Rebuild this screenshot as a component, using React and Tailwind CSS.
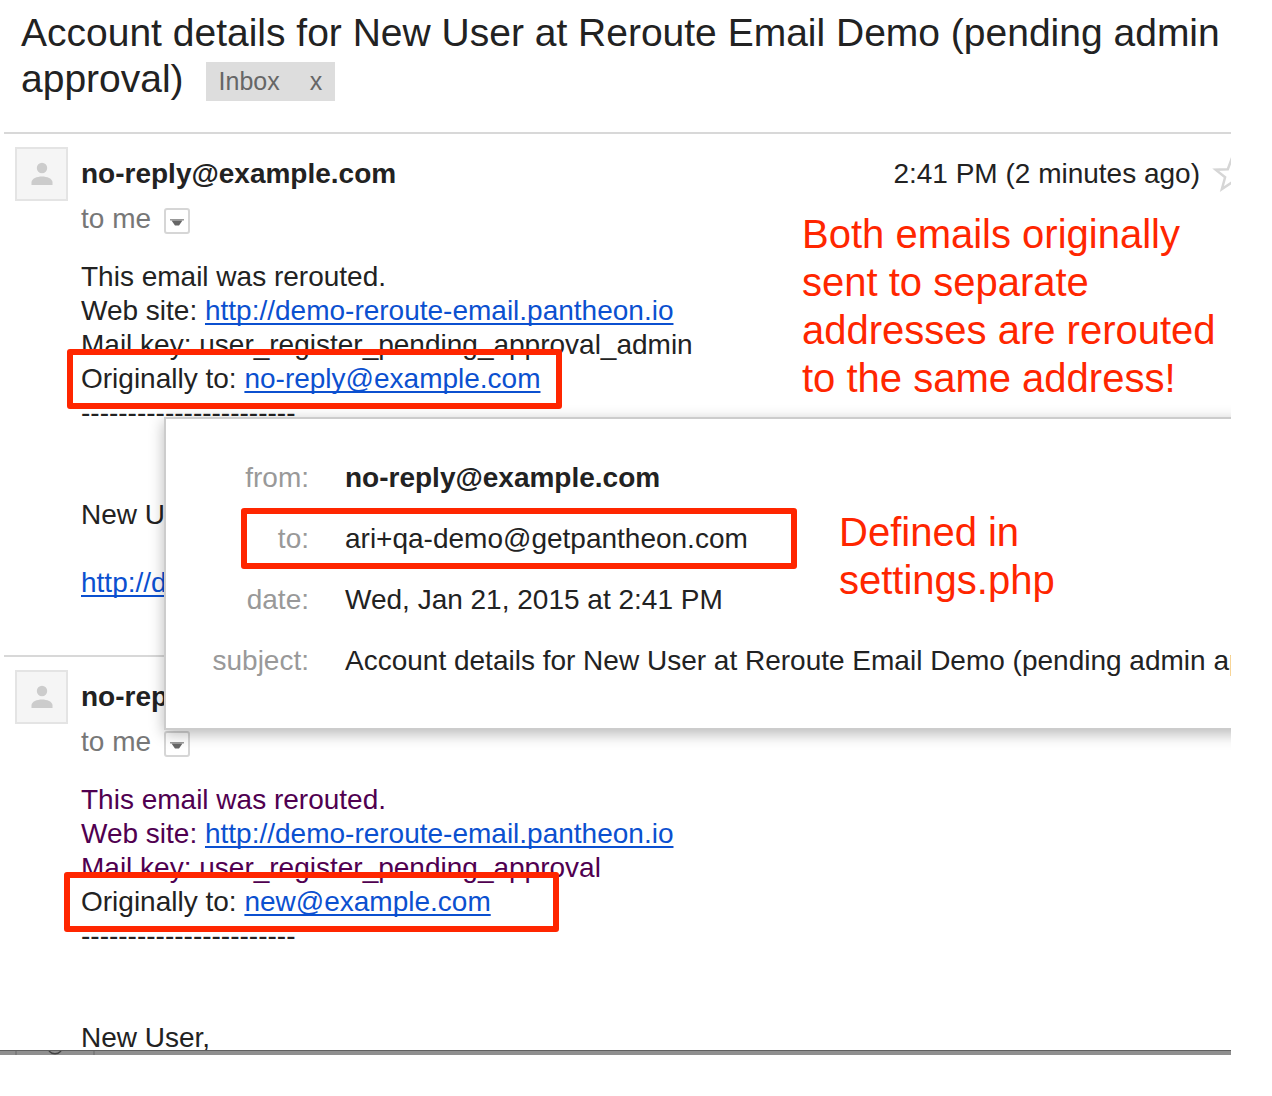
const SUBJECT = 'Account details for New User at Reroute Email Demo (pending admin approval)';

function Avatar() {
  return (
    <div className="flex h-[54px] w-[53px] shrink-0 items-center justify-center border-2 border-[#e4e4e4] bg-[#f5f5f5]">
      <svg viewBox="0 0 22 24" className="h-6 w-[22px]" fill="#cccccc" aria-hidden="true">
        <circle cx="11" cy="6" r="5.2" />
        <path d="M0.500 23v-2.500c0-4 5.500-6 10.500-6s10.500 2 10.500 6V23z" />
      </svg>
    </div>
  );
}

function Star() {
  return (
    <svg viewBox="0 0 40 40" className="h-10 w-10" fill="none" stroke="#d6d6d6" strokeWidth="2.500" aria-hidden="true">
      <path d="M20 4l4.200 11.200 12.200.5-9.500 7.600 3.200 11.700L20 28.300 9.900 35l3.200-11.700-9.500-7.600 12.200-.5z" />
    </svg>
  );
}

function MailLink({ children, href }) {
  return (
    <a href={href} className="text-[#0b50d0] underline decoration-2 underline-offset-3 [text-decoration-skip-ink:none]">
      {children}
    </a>
  );
}

function Message({ time, tone, mailKey, original, box, tail, className, children }) {
  return (
    <article className={'relative ml-1 flex gap-[13px] border-t-2 border-[#d8d8d8] pt-[13px] pl-[11px] ' + className}>
      <Avatar />
      <div className="min-w-0 flex-1">
        <header className="flex h-[54px] items-center justify-between leading-[54px]">
          <h2 className="font-bold">no-reply@example.com</h2>
          {time && (
            <div className="-mr-[21px] flex shrink-0 items-center gap-3">
              <time>{time}</time>
              <button type="button" aria-label="Star message">
                <Star />
              </button>
            </div>
          )}
        </header>
        <div className="flex h-9 items-center gap-[13px] text-[#777777]">
          <span>to me</span>
          <button
            type="button"
            aria-label="Show details"
            className="mt-1 flex h-[26px] w-[26px] items-center justify-center rounded-[3px] border-2 border-[#d6d6d6] bg-white"
          >
            <svg viewBox="0 0 14 8" className="mt-1 h-2 w-[14px]" aria-hidden="true">
              <path d="M0 0h14v1.500H0z" fill="#999999" />
              <path d="M1.500 1.500h11L9 6.500H5z" fill="#666666" />
            </svg>
          </button>
        </div>
        <div className="mt-[23px] whitespace-nowrap">
          <p className={tone}>This email was rerouted.</p>
          <p className={tone}>
            Web site: <MailLink href="#site">http://demo-reroute-email.pantheon.io</MailLink>
          </p>
          <p className={tone}>Mail key: {mailKey}</p>
          <p className="relative">
            Originally to: <MailLink href="#original">{original}</MailLink>
            <span className={'pointer-events-none absolute -top-[13px] h-[60px] w-[495px] rounded-[3px] border-6 border-[#ff2600] ' + box} />
          </p>
          <p>-----------------------</p>
          {tail}
        </div>
      </div>
      {children}
    </article>
  );
}

function Row({ label, children, boxed }) {
  return (
    <div className="relative flex gap-9 leading-[61px]">
      <dt className="w-[111px] shrink-0 text-right text-[#999999]">{label}</dt>
      <dd className="whitespace-nowrap">{children}</dd>
      {boxed && (
        <span className="pointer-events-none absolute top-0 left-[43px] h-[61px] w-[556px] rounded-[3px] border-6 border-[#ff2600]" />
      )}
    </div>
  );
}

export default function App() {
  return (
    <div className="bg-white pr-[41px] font-['Liberation_Sans',Arial,sans-serif] text-[28px] leading-[34px] text-[#222222]">
      <main className="overflow-hidden">
        <h1 className="pt-[10px] pb-[30px] pl-[21px] text-[39px] leading-[46px]">
          {SUBJECT}
          <span className="ml-[22px] inline-flex h-[39px] items-center gap-[30px] bg-[#dddddd] px-[13px] align-[2px] text-[25px] leading-[39px] text-[#666666]">
            Inbox
            <button type="button" aria-label="Remove Inbox label">
              x
            </button>
          </span>
        </h1>

        <Message
          time="2:41 PM (2 minutes ago)"
          tone=""
          mailKey="user_register_pending_approval_admin"
          original="no-reply@example.com"
          box="-left-[14px]"
          className="z-10 pb-[55px]"
          tail={
            <>
              <p className="mt-[68px]">New User,</p>
              <p className="mt-[34px]">
                <MailLink href="#login">http://demo</MailLink>
              </p>
            </>
          }
        >
          <p className="absolute top-[76px] right-0 w-[429px] text-[40px] leading-[48px] text-[#ff2600]">
            Both emails originally sent to separate addresses are rerouted to the same address!
          </p>
          <section
            aria-label="Message details"
            className="absolute top-[283px] -right-[20px] left-[160px] border-2 border-[#cccccc] bg-white pt-7 pb-[37px] pl-8 shadow-[0_4px_14px_rgba(0,0,0,0.28)]"
          >
            <dl>
              <Row label="from:">
                <b>no-reply@example.com</b>
              </Row>
              <Row label="to:" boxed>
                ari+qa-demo@getpantheon.com
              </Row>
              <Row label="date:">Wed, Jan 21, 2015 at 2:41 PM</Row>
              <Row label="subject:">{SUBJECT}</Row>
            </dl>
            <p className="absolute top-[89px] left-[673px] text-[40px] leading-[48px] text-[#ff2600]">
              Defined in
              <br />
              settings.php
            </p>
          </section>
        </Message>

        <Message
          tone="text-[#500050]"
          mailKey="user_register_pending_approval"
          original="new@example.com"
          box="-left-[17px]"
          className=""
          tail={<p className="mt-[68px]">New User,</p>}
        />
        <div className="relative z-20 -mt-[5px] flex h-[5px] overflow-hidden border-t border-[#606060] bg-[#8f8f8f]">
          <svg viewBox="0 0 96 4" className="h-1 w-24" fill="none" aria-hidden="true">
            <path d="M16 0v4M94 0v4" stroke="#777777" strokeWidth="1.500" />
            <path d="M49 0c3 3.500 9 3.500 12 0" stroke="#444444" strokeWidth="1.500" />
          </svg>
        </div>
      </main>
    </div>
  );
}
